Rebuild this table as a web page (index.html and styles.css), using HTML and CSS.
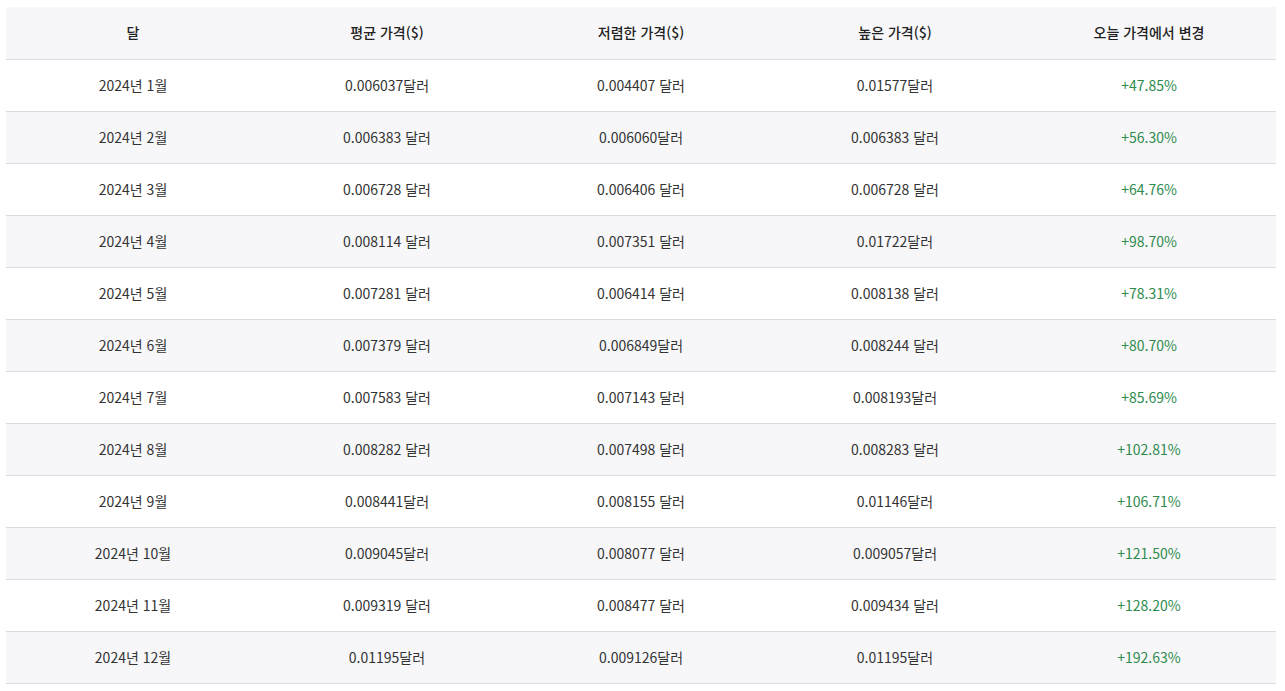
FILE: index.html
```html
<!DOCTYPE html>
<html lang="ko">
<head>
<meta charset="utf-8">
<link rel="stylesheet" href="styles.css">
</head>
<body>
<div class="wrap">
<table class="price-table">
<thead>
<tr><th>달</th><th>평균 가격($)</th><th>저렴한 가격($)</th><th>높은 가격($)</th><th>오늘 가격에서 변경</th></tr>
</thead>
<tbody>
<tr><td>2024년 1월</td><td>0.006037달러</td><td>0.004407 달러</td><td>0.01577달러</td><td class="up">+47.85%</td></tr>
<tr><td>2024년 2월</td><td>0.006383 달러</td><td>0.006060달러</td><td>0.006383 달러</td><td class="up">+56.30%</td></tr>
<tr><td>2024년 3월</td><td>0.006728 달러</td><td>0.006406 달러</td><td>0.006728 달러</td><td class="up">+64.76%</td></tr>
<tr><td>2024년 4월</td><td>0.008114 달러</td><td>0.007351 달러</td><td>0.01722달러</td><td class="up">+98.70%</td></tr>
<tr><td>2024년 5월</td><td>0.007281 달러</td><td>0.006414 달러</td><td>0.008138 달러</td><td class="up">+78.31%</td></tr>
<tr><td>2024년 6월</td><td>0.007379 달러</td><td>0.006849달러</td><td>0.008244 달러</td><td class="up">+80.70%</td></tr>
<tr><td>2024년 7월</td><td>0.007583 달러</td><td>0.007143 달러</td><td>0.008193달러</td><td class="up">+85.69%</td></tr>
<tr><td>2024년 8월</td><td>0.008282 달러</td><td>0.007498 달러</td><td>0.008283 달러</td><td class="up">+102.81%</td></tr>
<tr><td>2024년 9월</td><td>0.008441달러</td><td>0.008155 달러</td><td>0.01146달러</td><td class="up">+106.71%</td></tr>
<tr><td>2024년 10월</td><td>0.009045달러</td><td>0.008077 달러</td><td>0.009057달러</td><td class="up">+121.50%</td></tr>
<tr><td>2024년 11월</td><td>0.009319 달러</td><td>0.008477 달러</td><td>0.009434 달러</td><td class="up">+128.20%</td></tr>
<tr><td>2024년 12월</td><td>0.01195달러</td><td>0.009126달러</td><td>0.01195달러</td><td class="up">+192.63%</td></tr>
</tbody>
</table>
</div>
</body>
</html>
```
FILE: styles.css
```css
html, body {
  margin: 0;
  padding: 0;
  background: #ffffff;
}
.wrap {
  padding: 7px 0 0 6px;
}
.price-table {
  width: 1270px;
  border-collapse: collapse;
  table-layout: fixed;
  font-family: "Noto Sans CJK KR", "Noto Sans", sans-serif;
  font-size: 14px;
  color: #333333;
}
.price-table th,
.price-table td {
  height: 49px;
  padding: 0 0 2px;
  text-align: center;
  vertical-align: middle;
  border-bottom: 1px solid #d9dbe1;
}
.price-table th {
  height: 50px;
  font-weight: 500;
  background: #f7f7f9;
  color: #222222;
}
.price-table tbody tr:nth-child(even) td {
  background: #f7f7f9;
}
.price-table td.up {
  color: #2e8b4e;
}
```
